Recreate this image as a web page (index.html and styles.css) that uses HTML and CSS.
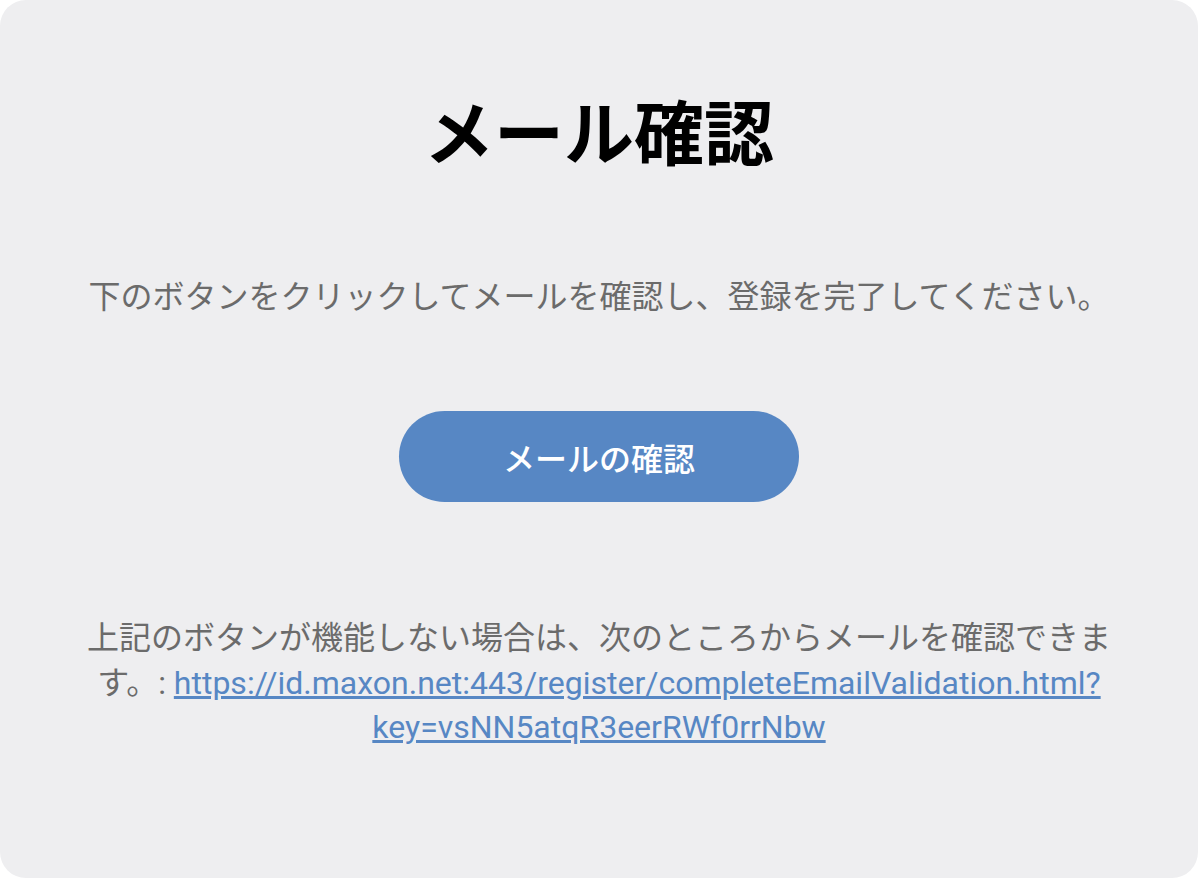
FILE: index.html
```html
<!DOCTYPE html>
<html lang="ja">
<head>
<meta charset="utf-8">
<title>メール確認</title>
<link rel="stylesheet" href="styles.css">
</head>
<body>
<main class="card">
  <h1 class="title">メール確認</h1>
  <p class="lead">下のボタンをクリックしてメールを確認し、登録を完了してください。</p>
  <a class="button" href="#">メールの確認</a>
  <p class="fallback">上記のボタンが機能しない場合は、次のところからメールを確認できます。: <a class="link" href="#">https://id.maxon.net:443/register/completeEmailValidation.html?key=vsNN5atqR3eerRWf0rrNbw</a></p>
</main>
</body>
</html>
```
FILE: styles.css
```css
html, body {
  margin: 0;
  padding: 0;
  background: #ffffff;
}
body {
  width: 1200px;
  height: 880px;
  font-family: Roboto, "Noto Sans CJK JP", sans-serif;
}
.card {
  box-sizing: border-box;
  width: 1198px;
  height: 878px;
  background: #eeeef0;
  border-radius: 26px;
  padding: 94px 84px 0;
  display: flex;
  flex-direction: column;
  align-items: center;
  text-align: center;
}
.title {
  margin: 0;
  font-size: 70px;
  line-height: 84px;
  font-weight: 700;
  color: #000000;
}
.lead {
  margin: 97px 0 0;
  font-size: 32px;
  line-height: 44px;
  color: #6b6b6b;
}
.button {
  margin-top: 92px;
  width: 400px;
  height: 91px;
  border-radius: 46px;
  background: #5787c4;
  color: #ffffff;
  text-decoration: none;
  font-size: 32px;
  font-weight: 500;
  display: flex;
  align-items: center;
  justify-content: center;
}
.fallback {
  margin: 114px 0 0;
  font-size: 32px;
  line-height: 44.5px;
  color: #6b6b6b;
  word-break: break-all;
}
.link {
  color: #5787c4;
  text-decoration: underline;
  word-break: normal;
  overflow-wrap: anywhere;
}
```
